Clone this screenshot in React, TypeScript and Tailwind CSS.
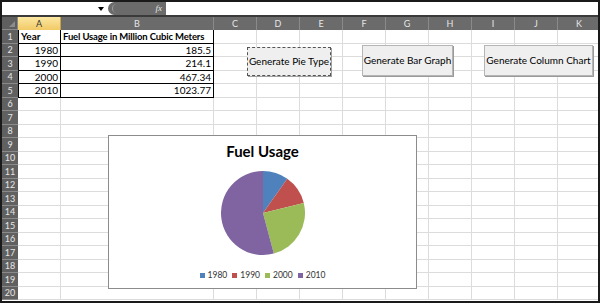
import React from "react";

const COLS = ["A", "B", "C", "D", "E", "F", "G", "H", "I", "J", "K"];

const DATA = [
  { year: "1980", value: 185.5, label: "185.5", color: "#4f81bd" },
  { year: "1990", value: 214.1, label: "214.1", color: "#c0504d" },
  { year: "2000", value: 467.34, label: "467.34", color: "#9bbb59" },
  { year: "2010", value: 1023.77, label: "1023.77", color: "#8064a2" },
];

function slicePath(cx: number, cy: number, r: number, a0: number, a1: number) {
  const p = (a: number) => [cx + r * Math.sin(a), cy - r * Math.cos(a)];
  const [x0, y0] = p(a0);
  const [x1, y1] = p(a1);
  const large = a1 - a0 > Math.PI ? 1 : 0;
  return `M${cx},${cy} L${x0},${y0} A${r},${r} 0 ${large} 1 ${x1},${y1} Z`;
}

function PieChart() {
  const total = DATA.reduce((s, d) => s + d.value, 0);
  let acc = 0;
  return (
    <svg width="84" height="86" viewBox="0 0 84 86">
      {DATA.map((d) => {
        const a0 = (acc / total) * Math.PI * 2;
        acc += d.value;
        const a1 = (acc / total) * Math.PI * 2;
        return <path key={d.year} d={slicePath(42, 43, 42, a0, a1)} fill={d.color} />;
      })}
    </svg>
  );
}

function Cell({ row, col }: { row: number; col: number }) {
  const inTable = row <= 5 && col <= 1;
  let content: React.ReactNode = null;
  let align = "justify-end";
  if (row === 1 && col === 0) {
    content = <span className="font-bold">Year</span>;
    align = "justify-start";
  } else if (row === 1 && col === 1) {
    content = (
      <span className="font-bold tracking-[-0.15px] text-[9.5px]">Fuel Usage in Million Cubic Meters</span>
    );
    align = "justify-start";
  } else if (row >= 2 && row <= 5) {
    const d = DATA[row - 2];
    if (col === 0) content = d.year;
    if (col === 1) content = d.label;
  }
  return (
    <div
      className={`flex items-center overflow-hidden whitespace-nowrap px-[2px] text-[10px] leading-none text-black ${align} ${
        inTable ? "border-b border-r border-black" : "border-b border-r border-[#dcdcdc]"
      } ${inTable && col === 0 ? "border-l border-l-black" : ""}`}
    >
      {content}
    </div>
  );
}

export default function App() {
  const rows = Array.from({ length: 20 }, (_, i) => i + 1);
  return (
    <div
      className="relative h-[303px] w-[600px] overflow-hidden border-2 border-[#1a1a1a] bg-white"
      style={{ fontFamily: "Lato, 'Open Sans', sans-serif" }}
    >
      {/* formula bar */}
      <div className="flex h-[15px] items-stretch border-b-[2px] border-[#3a3a3a] bg-white">
        <div className="relative w-[106px] bg-white">
          <span className="absolute right-[4px] top-[5px] h-0 w-0 border-x-[3px] border-t-[4px] border-x-transparent border-t-black" />
        </div>
        <div className="flex w-[58px] items-center justify-end rounded-l-full bg-[#6b6b6b] pr-[4px]">
          <span className="mr-auto ml-[4px] h-[9px] w-[9px] rounded-full border-l border-[#9a9a9a]" />
          <span className="text-[9px] italic text-[#e8e8e8]" style={{ fontFamily: "'Liberation Serif', serif" }}>
            fx
          </span>
        </div>
        <div className="flex-1 bg-white" />
      </div>

      {/* sheet grid */}
      <div className="grid grid-cols-[16px_43px_153px_repeat(9,43px)] grid-rows-[13px_repeat(20,13.5px)]">
        <div className="relative border-b border-r border-[#8a8a8a] bg-[#5f5f5f]">
          <span className="absolute bottom-[2px] right-[2px] h-[6px] w-[6px] bg-[#8c8c8c] [clip-path:polygon(100%_0,100%_100%,0_100%)]" />
        </div>
        {COLS.map((c, i) => (
          <div
            key={c}
            className={`flex items-center justify-center text-[9px] leading-none ${
              i === 0
                ? "border-r border-[#c9a24a] bg-gradient-to-b from-[#fbe7a1] to-[#f2c964] text-[#333]"
                : "border-r border-[#8a8a8a] bg-[#6b6b6b] text-[#e6e6e6]"
            }`}
          >
            {c}
          </div>
        ))}
        {rows.map((r) => (
          <React.Fragment key={r}>
            <div className="flex items-center justify-center border-b border-[#8a8a8a] bg-[#606060] text-[9px] leading-none text-[#e6e6e6]">
              {r}
            </div>
            {COLS.map((c, ci) => (
              <Cell key={c} row={r} col={ci} />
            ))}
          </React.Fragment>
        ))}
      </div>

      {/* buttons */}
      <button className="absolute left-[245px] top-[45px] h-[29px] w-[84px] border border-dashed border-[#555] bg-[#efefef] text-[10px] text-black shadow-[1px_1px_0_#a0a0a0]">
        Generate Pie Type
      </button>
      <button className="absolute left-[360px] top-[43px] h-[31px] w-[91px] border border-[#b5b5b5] bg-[#efefef] text-[10px] text-black shadow-[1px_1px_0_#9a9a9a]">
        Generate Bar Graph
      </button>
      <button className="absolute left-[482px] top-[43px] h-[31px] w-[109px] border border-[#b5b5b5] bg-[#efefef] text-[10px] text-black shadow-[1px_1px_0_#9a9a9a]">
        Generate Column Chart
      </button>

      {/* chart */}
      <div className="absolute left-[106px] top-[133px] flex h-[154px] w-[309px] flex-col items-center border border-[#8c8c8c] bg-white">
        <div className="mt-[8px] text-[15px] font-bold leading-none text-black">Fuel Usage</div>
        <div className="mt-[11px]">
          <PieChart />
        </div>
        <div className="mt-[15px] flex gap-[5px] text-[8.5px] leading-none text-[#333]">
          {DATA.map((d) => (
            <div key={d.year} className="flex items-center gap-[3px]">
              <span className="h-[5px] w-[5px]" style={{ background: d.color }} />
              {d.year}
            </div>
          ))}
        </div>
      </div>
    </div>
  );
}
